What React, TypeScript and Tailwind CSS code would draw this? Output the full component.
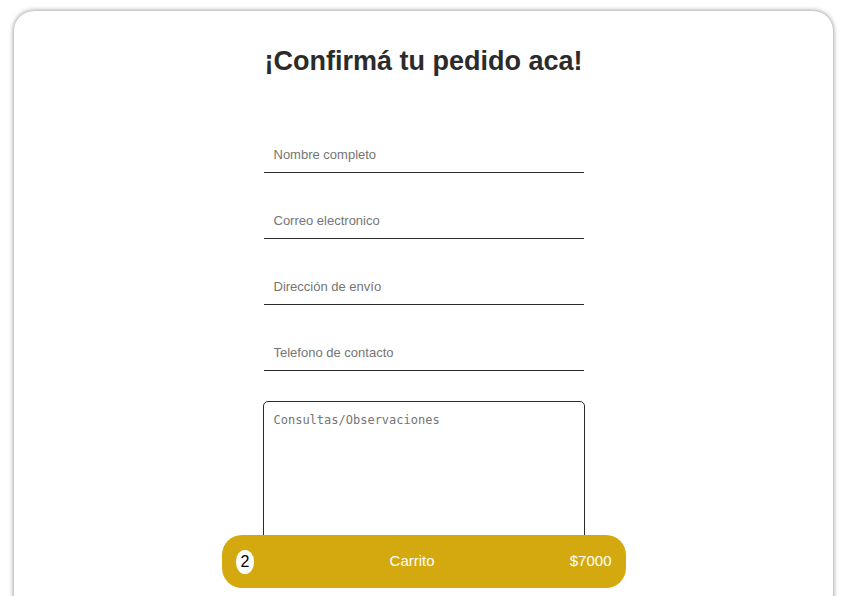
const fields = [
  { id: "nombre", label: "Nombre completo", type: "text" },
  { id: "correo", label: "Correo electronico", type: "email" },
  { id: "direccion", label: "Dirección de envío", type: "text" },
  { id: "telefono", label: "Telefono de contacto", type: "tel" },
];

export default function App() {
  return (
    <div className="h-screen overflow-hidden bg-white pt-[11px] pr-4 pl-[14px] font-['Liberation_Sans',Arial,sans-serif] text-[#2b2b2b]">
      <main className="flex min-h-[720px] flex-col items-center rounded-[20px] bg-white pt-[34px] shadow-[0_0_5px_rgba(0,0,0,0.5)]">
        <h1 className="text-[27px] leading-8 font-bold">¡Confirmá tu pedido aca!</h1>
        <form className="mt-[60px] flex w-[322px] max-w-full flex-col gap-[30px]">
          {fields.map((f) => (
            <input
              key={f.id}
              id={f.id}
              type={f.type}
              aria-label={f.label}
              placeholder={f.label}
              className="mx-px h-9 border-b border-[#2b2b2b] bg-transparent px-[10px] text-[13px] outline-none placeholder:text-[#757575]"
            />
          ))}
          <textarea
            aria-label="Consultas/Observaciones"
            placeholder="Consultas/Observaciones"
            className="h-[172px] resize-none rounded-[5px] border border-[#2b2b2b] p-[10px] font-['DejaVu_Sans_Mono',monospace] text-[12px] leading-4 outline-none placeholder:text-[#757575]"
          />
        </form>
      </main>
      <div className="fixed inset-x-0 bottom-2 flex justify-center pr-4 pl-[14px]">
        <button
          type="button"
          className="flex h-[53px] w-[404px] items-center justify-between rounded-[20px] bg-[#d4a90f] px-[14px] text-[15px] text-white"
        >
          <span className="rounded-[50%] bg-white px-[5px] py-[2px] text-[16px] leading-5 text-black">2</span>
          <span>Carrito</span>
          <span>$7000</span>
        </button>
      </div>
    </div>
  );
}
